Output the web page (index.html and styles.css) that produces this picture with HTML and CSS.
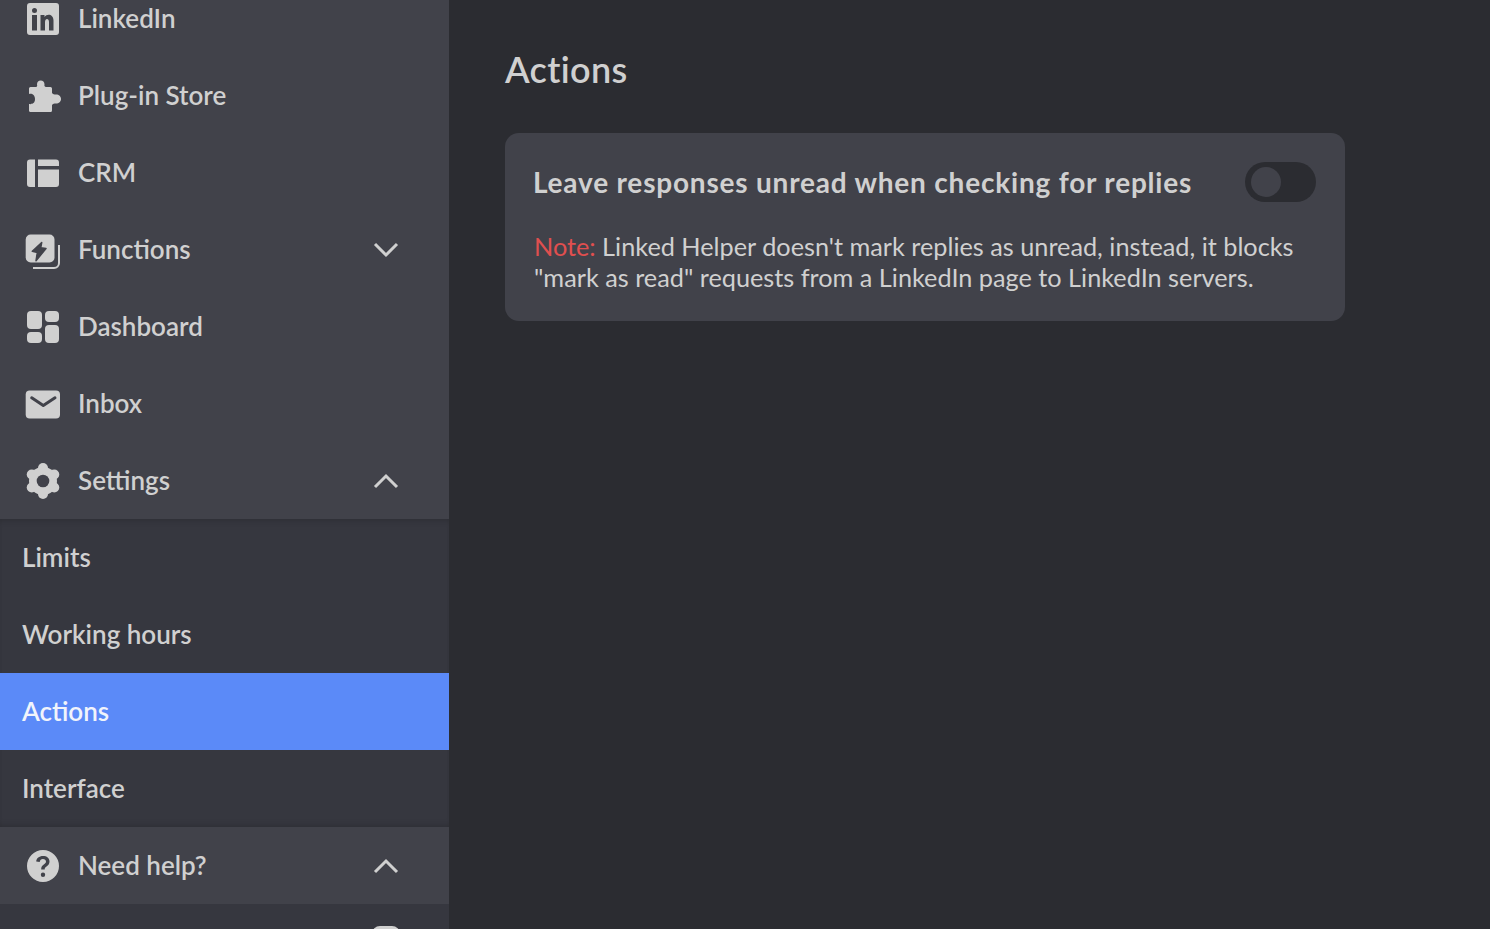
FILE: index.html
```html
<!DOCTYPE html>
<html lang="en">
<head>
<meta charset="utf-8">
<title>Actions</title>
<link rel="stylesheet" href="styles.css">
</head>
<body>
<div class="app">
  <nav class="sidebar">
    <div class="menu">
      <div class="row"><svg class="ico" viewBox="0 0 32 32"><path fill-rule="evenodd" d="M3 0h26a3 3 0 0 1 3 3v26a3 3 0 0 1-3 3H3a3 3 0 0 1-3-3V3a3 3 0 0 1 3-3zM5 12v15.500h5V12zM7.500 5a2.500 2.500 0 1 0 0 5 2.500 2.500 0 0 0 0-5zM13.500 12v15.500h4.500V19c0-4 4-4 4 0v8.500h4.500V17.500c0-6.500-6.500-7.500-9-3.500v-2z"/></svg><span>LinkedIn</span></div>
      <div class="row"><svg class="ico wide" viewBox="0 0 36 36"><path d="M5.500 9H11c1 0 1.500-1 1-2.500C12 4 13.500 2.500 15.700 2.500S19.500 4 19.500 6.500C19 8 20 9 21 9h4.500A1.500 1.500 0 0 1 27 10.500V15c1 1.500 2 1.500 4 1.500 3 0 5 2 5 4.500s-2 4.500-5 4.500c-2 0-3 0-4 1.500v5.500a1.500 1.500 0 0 1-1.500 1.500h-20A1.500 1.500 0 0 1 4 33v-7c2 .500 6 0 6-5s-4-6-6-5v-5.500A1.500 1.500 0 0 1 5.500 9z"/></svg><span>Plug-in Store</span></div>
      <div class="row"><svg class="ico" viewBox="0 0 32 32"><path d="M3 2.500h5V30H3a3 3 0 0 1-3-3V5.500a3 3 0 0 1 3-3zM11 2.500h18a3 3 0 0 1 3 3V9H11zM11 12.500h21V27a3 3 0 0 1-3 3H11z"/></svg><span>CRM</span></div>
      <div class="row"><svg class="ico wide" viewBox="0 0 36 36"><rect x=".7" y="2.500" width="28.800" height="28" rx="5"/><path class="cut-fill" d="M16.700 10.500L7.300 19.200l5 1.300L11 28.800l10-12.300-5.300-.7z"/><path class="line" d="M34 13v18a5 5 0 0 1-5 5H8"/></svg><span>Functions</span><svg class="chev" viewBox="0 0 26 16"><path d="M2 2l11 11L24 2"/></svg></div>
      <div class="row"><svg class="ico" viewBox="0 0 32 32"><rect width="15" height="18" rx="4"/><rect y="21" width="15" height="11" rx="4"/><rect x="18" width="14" height="11" rx="4"/><rect x="18" y="14" width="14" height="18" rx="4"/></svg><span>Dashboard</span></div>
      <div class="row"><svg class="ico wide" viewBox="0 0 36 28"><rect x=".7" y=".5" width="34.300" height="28" rx="4"/><path class="cut" d="M6.700 7.800l11.600 7.700L30 7.800"/></svg><span>Inbox</span></div>
      <div class="row"><svg class="ico wide" viewBox="0 0 36 36"><circle cx="18" cy="18" r="14"/><circle cx="18" cy="5" r="5"/><circle cx="18" cy="31" r="5"/><circle cx="6.740" cy="11.500" r="5"/><circle cx="29.260" cy="11.500" r="5"/><circle cx="6.740" cy="24.500" r="5"/><circle cx="29.260" cy="24.500" r="5"/><circle class="hole" cx="18" cy="18" r="6.300"/></svg><span>Settings</span><svg class="chev" viewBox="0 0 26 16"><path d="M2 14L13 3l11 11"/></svg></div>
    </div>
    <div class="submenu">
      <div class="row sub"><span>Limits</span></div>
      <div class="row sub"><span>Working hours</span></div>
      <div class="row sub active"><span>Actions</span></div>
      <div class="row sub"><span>Interface</span></div>
    </div>
    <div class="row help"><svg class="ico" viewBox="0 0 32 32"><path fill-rule="evenodd" d="M16 0a16 16 0 1 1 0 32 16 16 0 0 1 0-32zM16 6c-4 0-6.500 2.300-6.800 5.500l3.500.4c.2-1.700 1.400-2.800 3.200-2.800 1.800 0 3.100 1 3.100 2.500 0 1.300-.8 2-2.200 3-1.900 1.300-2.600 2.600-2.600 4.400v.6h3.500v-.5c0-1 .4-1.600 1.800-2.600 1.800-1.300 3-2.600 3-5C22.500 8 19.800 6 16 6zM16 22.500a2.200 2.200 0 1 0 0 4.400 2.200 2.200 0 0 0 0-4.400z"/></svg><span>Need help?</span><svg class="chev" viewBox="0 0 26 16"><path d="M2 14L13 3l11 11"/></svg></div>
    <div class="rest"><i class="peek"></i></div>
  </nav>
  <main class="content">
    <h1 class="title">Actions</h1>
    <section class="card">
      <div class="card-head">
        <h2 class="card-title">Leave responses unread when checking for replies</h2>
        <div class="toggle"><i class="knob"></i></div>
      </div>
      <p class="note"><span class="red">Note:</span> Linked Helper doesn't mark replies as unread, instead, it blocks<br>"mark as read" requests from a LinkedIn page to LinkedIn servers.</p>
    </section>
  </main>
</div>
</body>
</html>
```
FILE: styles.css
```css
* { box-sizing: border-box; }
html, body { margin: 0; height: 100%; overflow: hidden; }
body { background: #2b2c31; color: #d0d0d0; font-family: Lato, "Open Sans", sans-serif; }
.app { display: flex; height: 929px; overflow: hidden; }
.sidebar { width: 449px; flex: none; height: 929px; background: #36373f; overflow: hidden; }
.menu { margin-top: -20px; background: #41424a; }
.row { height: 77px; display: flex; align-items: center; padding-left: 26px; padding-right: 50px; font-size: 26px; font-weight: 600; letter-spacing: 0; position: relative; }
.row span { flex: 1; margin-left: 19px; padding-bottom: 2px; }
.ico { width: 32px; height: 32px; margin-left: 1px; fill: #d0d0d0; flex: none; overflow: visible; }
.ico.wide { width: 36px; height: 36px; margin: 0 -2px 0 -1px; }
.line { fill: none; stroke: #d0d0d0; stroke-width: 2; }
.cut { fill: none; stroke: #41424a; stroke-width: 3; stroke-linecap: round; stroke-linejoin: round; }
.cut-fill { fill: #41424a; stroke: #41424a; stroke-width: 1.500; stroke-linejoin: round; }
.hole { fill: #41424a; }
.chev { width: 26px; height: 16px; fill: none; stroke: #d0d0d0; stroke-width: 3; flex: none; }
.submenu { background: #36373f; box-shadow: inset 0 6px 6px -4px rgba(0,0,0,.15), inset 0 -6px 6px -4px rgba(0,0,0,.15); }
.sub { padding-left: 22px; }
.sub span { margin-left: 0; }
.active { background: #5b8af8; color: #f1f4fb; }
.help { background: #41424a; }
.rest { height: 25px; position: relative; }
.peek { position: absolute; left: 372px; top: 22px; width: 28px; height: 14px; background: #d0d0d0; border-radius: 8px 8px 0 0; }
.content { flex: 1; padding: 46px 145px 0 56px; }
.title { margin: 0 0 40px; font-size: 36px; line-height: 47px; font-weight: 600; color: #d0d0d0; letter-spacing: .35px; }
.card { width: 840px; height: 188px; background: #41424a; border-radius: 14px; padding: 28px 29px 0 28px; }
.card-head { display: flex; align-items: center; justify-content: space-between; height: 41px; }
.card-title { margin: 0; font-size: 28px; font-weight: 700; letter-spacing: .8px; color: #d0d0d0; }
.toggle { width: 71px; height: 40px; border-radius: 20px; background: #2b2c31; padding: 5px 6px; flex: none; }
.knob { display: block; width: 30px; height: 30px; border-radius: 50%; background: #41424a; }
.note { margin: 29px 0 0 1px; font-size: 25.27px; line-height: 31px; font-weight: 400; white-space: nowrap; }
.red { color: #e04f4f; }
```
